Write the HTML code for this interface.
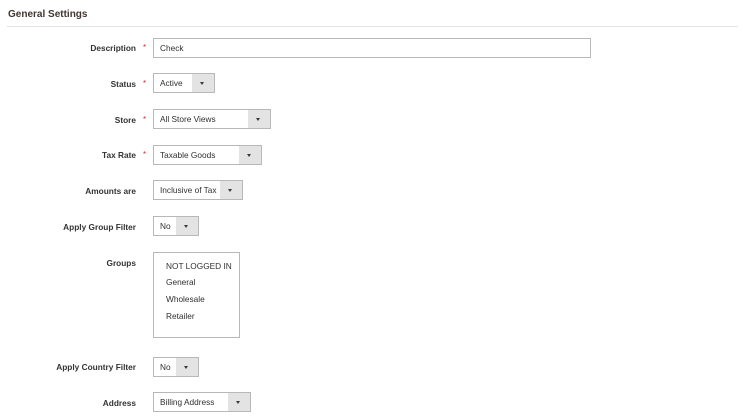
<!DOCTYPE html><html><head><style>
body{margin:0;width:743px;height:420px;background:#fff;font-family:"Liberation Sans",sans-serif;color:#303030;position:relative;overflow:hidden}
.h{position:absolute;left:8px;top:9px;font-size:10px;font-weight:bold;color:#41362f}
.ln{position:absolute;left:7px;top:26px;width:731px;height:1px;background:#e3e3e3}
.l{position:absolute;right:607px;font-size:8.3px;font-weight:bold;color:#333;text-align:right;white-space:nowrap}
.s{position:absolute;left:143px;font-size:8px;color:#e22626}
.f{position:absolute;left:153px;height:18px;border:1px solid #b8b8b8;box-sizing:content-box;font-size:8.3px;line-height:18px;background:#fff}
.f span{padding-left:6px}
.a{position:absolute;right:0;top:0;width:22px;height:18px;background:#e3e3e3}
.a:after{content:"";position:absolute;left:8px;top:8px;border:2.5px solid transparent;border-top:3px solid #41362f}
.g{position:absolute;left:166px;font-size:8.3px}
</style></head><body>
<div class="h">General Settings</div><div class="ln"></div>
<div class="l" style="top:43px">Description</div><div class="s" style="top:43px">*</div>
<div class="f" style="top:38px;width:436px"><span>Check</span></div>
<div class="l" style="top:79px">Status</div><div class="s" style="top:79px">*</div>
<div class="f" style="top:73px;width:60px"><span>Active</span><i class="a"></i></div>
<div class="l" style="top:115px">Store</div><div class="s" style="top:115px">*</div>
<div class="f" style="top:109px;width:116px"><span>All Store Views</span><i class="a"></i></div>
<div class="l" style="top:150px">Tax Rate</div><div class="s" style="top:150px">*</div>
<div class="f" style="top:145px;width:107px"><span>Taxable Goods</span><i class="a"></i></div>
<div class="l" style="top:186px">Amounts are</div>
<div class="f" style="top:180px;width:88px"><span>Inclusive of Tax</span><i class="a"></i></div>
<div class="l" style="top:222px">Apply Group Filter</div>
<div class="f" style="top:216px;width:44px"><span>No</span><i class="a"></i></div>
<div class="l" style="top:258px">Groups</div>
<div class="f" style="top:252px;width:85px;height:84px"></div>
<div class="g" style="top:261px">NOT LOGGED IN</div>
<div class="g" style="top:277px">General</div>
<div class="g" style="top:294px">Wholesale</div>
<div class="g" style="top:311px">Retailer</div>
<div class="l" style="top:362px">Apply Country Filter</div>
<div class="f" style="top:357px;width:44px"><span>No</span><i class="a"></i></div>
<div class="l" style="top:398px">Address</div>
<div class="f" style="top:392px;width:96px"><span>Billing Address</span><i class="a"></i></div>
</body></html>
